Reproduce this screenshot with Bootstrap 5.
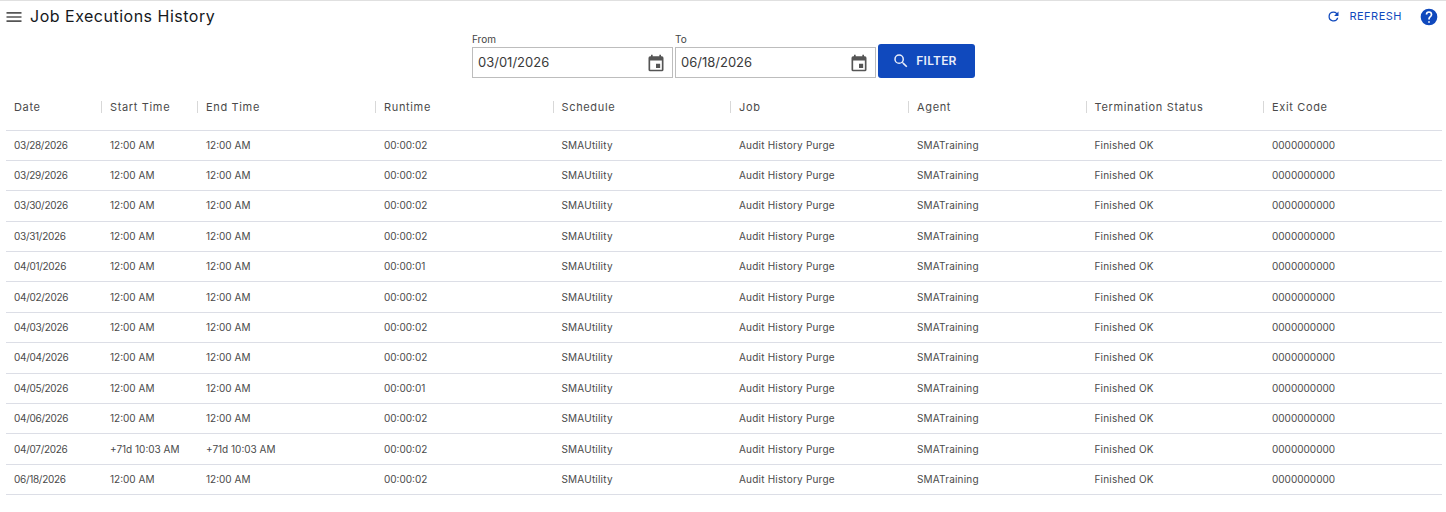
<!DOCTYPE html>
<html lang="en">
  <head>
    <meta charset="UTF-8" />
    <title>Job Executions History</title>
    <link href="https://cdn.jsdelivr.net/npm/bootstrap@5.3.0/dist/css/bootstrap.min.css" rel="stylesheet" />
    <style>
      body {
        font-family: Inter, "DejaVu Sans", sans-serif;
        background: #fff;
        border-top: 1px solid #e0e0e0;
        overflow: hidden;
      }
      .top-bar {
        height: 31px;
        padding: 0 7px 0 4px;
      }
      .page-title {
        font-size: 16px;
        font-weight: 400;
        color: #15181c;
        margin: 0 0 0 6px;
        letter-spacing: 0.5px;
      }
      .refresh-link {
        color: #1049bd;
        font-size: 11px;
        text-decoration: none;
        margin-right: 17px;
        letter-spacing: 0.5px;
      }
      .filter-row {
        height: 53px;
        margin-top: -7px;
        margin-bottom: 6px;
        padding-left: 472px;
      }
      .date-field { margin-right: 2px; }
      .date-label {
        font-size: 10px;
        line-height: 15px;
        height: 15px;
        color: #444;
      }
      .date-box {
        width: 201px;
        height: 31px;
        border: 1px solid #bdbdbd;
        padding: 0 6px 0 5px;
        font-size: 13px;
        color: #3a3a3a;
      }
      .filter-btn {
        width: 97px;
        height: 34px;
        background: #1049bd;
        border: 0;
        border-radius: 3px;
        color: #e9eefa;
        font-size: 12px;
        font-weight: 600;
        letter-spacing: 0.2px;
        padding: 0 4px 0 0;
      }
      .filter-btn svg { margin-right: 2px; }
      .history-wrap { padding: 0 5px 0 6px; }
      .history-table {
        table-layout: fixed;
        width: 1435px;
        margin: 0;
        font-size: 10px;
        color: #4a4a4a;
      }
      .history-table th {
        height: 46px;
        padding: 1px 8px 0;
        font-weight: 400;
        font-size: 11px;
        color: #4a4a4a;
        border-bottom: 1px solid #dcdee6;
        position: relative;
        letter-spacing: 0.65px;
        vertical-align: middle;
      }
      .history-table th + th::before {
        content: "";
        position: absolute;
        left: -1px;
        top: 17px;
        height: 12px;
        border-left: 1px solid #d8d8d8;
      }
      .history-table td {
        height: 30.4px;
        padding: 0 8px;
        border-bottom: 1px solid #dcdee6;
        color: #4a4a4a;
        vertical-align: middle;
        white-space: nowrap;
      }
      .history-table td.date-cell { letter-spacing: -0.3px; }
      .history-table td.name-cell { letter-spacing: 0.2px; }
    </style>
  </head>
  <body>
    <div class="top-bar d-flex align-items-center">
      <svg width="20" height="20" viewBox="0 0 24 24" fill="#555"><path d="M3 18h18v-2H3v2zm0-5h18v-2H3v2zm0-7v2h18V6H3z"/></svg>
      <h1 class="page-title">Job Executions History</h1>
      <a href="#" class="refresh-link d-flex align-items-center gap-2 ms-auto">
        <svg width="15" height="15" viewBox="0 0 24 24" fill="#1049bd"><path d="M17.65 6.35A7.96 7.96 0 0 0 12 4a8 8 0 1 0 7.73 10h-2.08A6 6 0 1 1 12 6c1.66 0 3.14.69 4.22 1.78L13 11h7V4l-2.35 2.35z"/></svg>
        REFRESH
      </a>
      <svg width="20" height="20" viewBox="0 0 24 24" fill="#1049bd"><path d="M12 2a10 10 0 1 0 0 20 10 10 0 0 0 0-20zm1 17h-2v-2h2v2zm2.07-7.75-.9.92C13.45 12.9 13 13.5 13 15h-2v-.5c0-1.1.45-2.1 1.17-2.83l1.24-1.26c.37-.36.59-.86.59-1.41a2 2 0 0 0-4 0H8a4 4 0 0 1 8 0c0 .88-.36 1.68-.93 2.25z"/></svg>
    </div>

    <div class="filter-row d-flex align-items-end">
      <div class="date-field">
        <div class="date-label">From</div>
        <div class="date-box d-flex align-items-center justify-content-between">
          <span>03/01/2026</span>
          <svg width="20" height="20" viewBox="0 0 24 24" fill="#555"><path d="M19 4h-1V2h-2v2H8V2H6v2H5a2 2 0 0 0-2 2v14a2 2 0 0 0 2 2h14a2 2 0 0 0 2-2V6a2 2 0 0 0-2-2zm0 16H5V9h14v11zM12 13h5v5h-5z"/></svg>
        </div>
      </div>
      <div class="date-field">
        <div class="date-label">To</div>
        <div class="date-box d-flex align-items-center justify-content-between">
          <span>06/18/2026</span>
          <svg width="20" height="20" viewBox="0 0 24 24" fill="#555"><path d="M19 4h-1V2h-2v2H8V2H6v2H5a2 2 0 0 0-2 2v14a2 2 0 0 0 2 2h14a2 2 0 0 0 2-2V6a2 2 0 0 0-2-2zm0 16H5V9h14v11zM12 13h5v5h-5z"/></svg>
        </div>
      </div>
      <button type="button" class="btn filter-btn d-flex align-items-center justify-content-center gap-1">
        <svg width="18" height="18" viewBox="0 0 24 24" fill="#e9eefa"><path d="M15.5 14h-.79l-.28-.27A6.47 6.47 0 0 0 16 9.5 6.5 6.5 0 1 0 9.5 16c1.61 0 3.09-.59 4.23-1.57l.27.28v.79l5 4.99L20.49 19l-4.99-5zm-6 0a4.5 4.5 0 1 1 0-9 4.5 4.5 0 0 1 0 9z"/></svg>
        FILTER
      </button>
    </div>

    <div class="history-wrap">
      <table class="history-table">
        <colgroup>
          <col style="width: 96px" /><col style="width: 96px" /><col style="width: 178px" /><col style="width: 177.5px" /><col style="width: 177.5px" /><col style="width: 178px" /><col style="width: 177.5px" /><col style="width: 177.5px" /><col style="width: 177.5px" />
        </colgroup>
        <thead>
          <tr><th>Date</th><th>Start Time</th><th>End Time</th><th>Runtime</th><th>Schedule</th><th>Job</th><th>Agent</th><th>Termination Status</th><th>Exit Code</th></tr>
        </thead>
        <tbody id="rows"></tbody>
      </table>
    </div>

    <script>
      const data = [
        ["03/28/2026", "12:00 AM", "00:00:02"],
        ["03/29/2026", "12:00 AM", "00:00:02"],
        ["03/30/2026", "12:00 AM", "00:00:02"],
        ["03/31/2026", "12:00 AM", "00:00:02"],
        ["04/01/2026", "12:00 AM", "00:00:01"],
        ["04/02/2026", "12:00 AM", "00:00:02"],
        ["04/03/2026", "12:00 AM", "00:00:02"],
        ["04/04/2026", "12:00 AM", "00:00:02"],
        ["04/05/2026", "12:00 AM", "00:00:01"],
        ["04/06/2026", "12:00 AM", "00:00:02"],
        ["04/07/2026", "+71d 10:03 AM", "00:00:02"],
        ["06/18/2026", "12:00 AM", "00:00:02"],
      ];
      document.getElementById("rows").innerHTML = data
        .map(
          (r) => `<tr><td class="date-cell">${r[0]}</td><td>${r[1]}</td><td>${r[1]}</td><td>${r[2]}</td><td class="name-cell">SMAUtility</td><td class="name-cell">Audit History Purge</td><td class="name-cell">SMATraining</td><td class="name-cell">Finished OK</td><td>0000000000</td></tr>`
        )
        .join("");
    </script>
    <script src="https://cdn.jsdelivr.net/npm/bootstrap@5.3.0/dist/js/bootstrap.bundle.min.js"></script>
  </body>
</html>
